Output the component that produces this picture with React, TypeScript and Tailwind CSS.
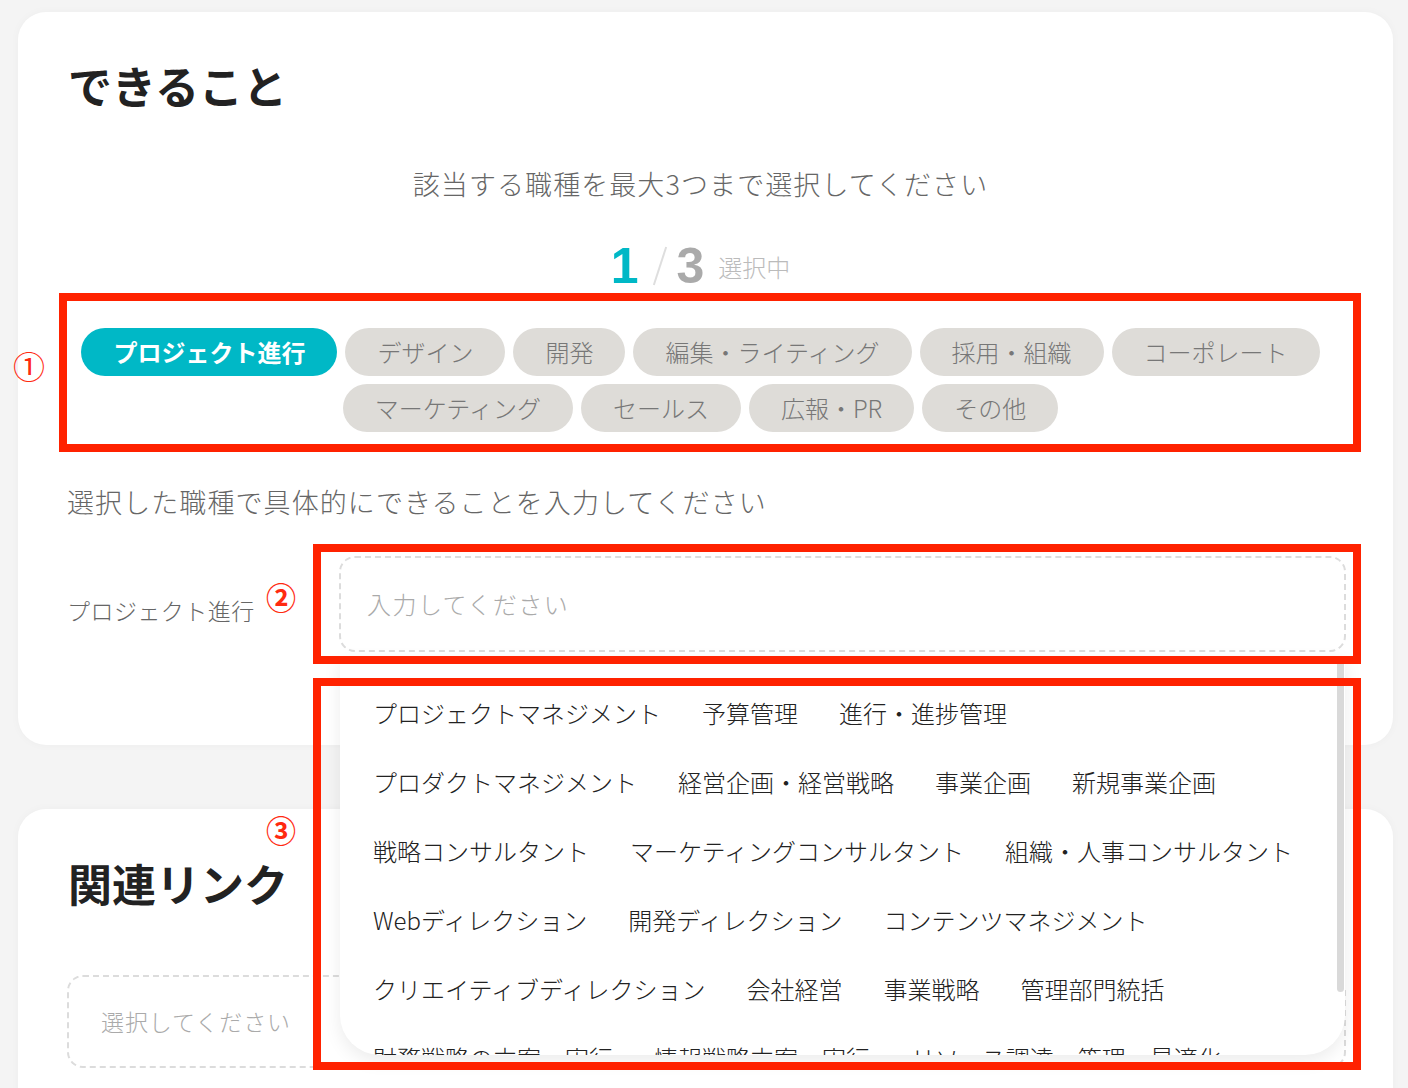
import clsx from "clsx";

const chipRows = [
  ["プロジェクト進行", "デザイン", "開発", "編集・ライティング", "採用・組織", "コーポレート"],
  ["マーケティング", "セールス", "広報・PR", "その他"],
];

const skillRows = [
  ["プロジェクトマネジメント", "予算管理", "進行・進捗管理"],
  ["プロダクトマネジメント", "経営企画・経営戦略", "事業企画", "新規事業企画"],
  ["戦略コンサルタント", "マーケティングコンサルタント", "組織・人事コンサルタント"],
  ["Webディレクション", "開発ディレクション", "コンテンツマネジメント"],
  ["クリエイティブディレクション", "会社経営", "事業戦略", "管理部門統括"],
  ["財務戦略の立案・実行", "情報戦略立案・実行", "リソース調達・管理・最適化"],
];

const selected = "プロジェクト進行";

function Chip({ label }: { label: string }) {
  const on = label === selected;
  return (
    <span
      className={clsx(
        "flex h-[48px] items-center rounded-full px-8 text-[24px] whitespace-nowrap",
        on ? "bg-[#00b8c6] font-bold text-white" : "bg-[#dedcd8] font-light text-[#777]"
      )}
    >
      {label}
    </span>
  );
}

function SkillMenu() {
  return (
    <div className="absolute left-[1px] right-[1px] top-[calc(100%+4px)] z-20 h-[399px] overflow-hidden rounded-b-[40px] bg-white shadow-[0_6px_18px_rgba(0,0,0,0.08)]">
      <div className="pl-[33px] pt-[22px]">
        {skillRows.map((row, i) => (
          <div key={i} className="flex gap-x-[41px] text-[24px] font-light leading-[69px] text-[#222] whitespace-nowrap">
            {row.map((s) => (
              <span key={s}>{s}</span>
            ))}
          </div>
        ))}
      </div>
      <div className="absolute right-[1px] top-0 h-[336px] w-[7px] rounded-full bg-[#d9d9d9]" />
    </div>
  );
}

export default function App() {
  return (
    <div className="relative h-[1088px] overflow-hidden bg-[#f4f4f4] pl-[18px] pr-[15px] pt-[12px] font-['Noto_Sans_CJK_JP',sans-serif]">
      {/* できること */}
      <section className="relative z-10 rounded-[28px] bg-white pb-[93px] pl-[49px] pr-[47px] pt-[43px] shadow-[0_0_10px_rgba(0,0,0,0.03)]">
        <h2 className="pl-[1px] text-[44px] font-bold leading-[60px] text-[#222]">できること</h2>

        <div className="flex flex-col items-center pr-[12px]">
          <p className="mt-[49px] text-[27px] font-light leading-[40px] tracking-[0.04em] text-[#666]">
            該当する職種を最大3つまで選択してください
          </p>

          <div className="mt-[34px] flex h-[56px] items-center">
            <span className="font-['Liberation_Sans',sans-serif] text-[50px] font-bold leading-none text-[#00b8c6]">1</span>
            <span className="ml-[20px] mr-[16px] inline-block h-[40px] w-[2px] rotate-[18deg] bg-[#dedede]" />
            <span className="font-['Liberation_Sans',sans-serif] text-[50px] font-bold leading-none text-[#aaa]">3</span>
            <span className="ml-[14px] mt-[1px] text-[24px] font-light text-[#bbb]">選択中</span>
          </div>

          <div className="mt-[34px] flex flex-col items-center gap-2">
            {chipRows.map((row, i) => (
              <div key={i} className="flex gap-2">
                {row.map((c) => (
                  <Chip key={c} label={c} />
                ))}
              </div>
            ))}
          </div>
        </div>

        <p className="mt-[50px] text-[27px] font-light leading-[40px] tracking-[0.04em] text-[#666]">
          選択した職種で具体的にできることを入力してください
        </p>

        <div className="mt-[34px] flex items-center">
          <div className="mt-[12px] w-[272px] text-[23px] font-light tracking-[0.02em] text-[#666]">プロジェクト進行</div>
          <div className="relative flex-1">
            <div className="flex h-[96px] items-center rounded-[16px] border-2 border-dashed border-[#dcdcdc] pl-[26px] text-[24px] font-light tracking-[0.06em] text-[#aaa]">
              入力してください
            </div>
            <SkillMenu />
          </div>
        </div>
      </section>

      {/* 関連リンク */}
      <section className="mt-[64px] h-[400px] rounded-[28px] bg-white pl-[49px] pr-[47px] pt-[44px] shadow-[0_0_10px_rgba(0,0,0,0.03)]">
        <h2 className="pl-[1px] text-[44px] font-bold leading-[60px] text-[#222]">関連リンク</h2>
        <div className="mt-[62px] flex h-[93px] items-center rounded-[16px] border-2 border-dashed border-[#dcdcdc] pl-[32px] text-[23px] font-light tracking-[0.04em] text-[#aaa]">
          選択してください
        </div>
      </section>

      {/* annotations */}
      <div className="absolute left-[59px] top-[293px] z-30 h-[159px] w-[1302px] border-[8px] border-[#ff2200]" />
      <div className="absolute left-[313px] top-[544px] z-30 h-[120px] w-[1048px] border-[8px] border-[#ff2200]" />
      <div className="absolute left-[313px] top-[678px] z-30 h-[392px] w-[1048px] border-[8px] border-[#ff2200]" />
      <span className="absolute left-[13px] top-[346px] z-30 text-[32px] leading-[38px] text-[#ff2a10]">①</span>
      <span className="absolute left-[266px] top-[579px] z-30 text-[30px] font-bold leading-[34px] text-[#ff2a10]">②</span>
      <span className="absolute left-[266px] top-[812px] z-30 text-[30px] font-bold leading-[34px] text-[#ff2a10]">③</span>
    </div>
  );
}
